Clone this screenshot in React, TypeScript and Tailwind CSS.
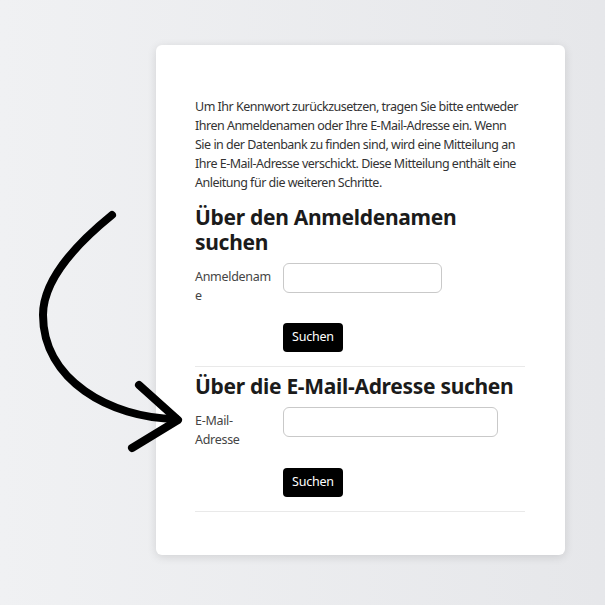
import type { ReactNode } from "react"

const font = { fontFamily: '"Noto Sans", "Open Sans", sans-serif' }

function Field({ label, inputWidth }: { label: ReactNode; inputWidth: string }) {
  return (
    <div className="flex items-start">
      <label className="w-[80px] pt-1 mr-[8px] text-[12.5px] leading-[19px] tracking-[-0.3px] text-[#444] break-all">
        {label}
      </label>
      <input
        type="text"
        className={`${inputWidth} h-[30px] rounded-[6px] border border-[#c9c9c9] bg-white px-2 text-[13px] outline-none`}
      />
    </div>
  )
}

function SearchButton() {
  return (
    <div className="pl-[88px]">
      <button className="h-[29px] px-[9px] rounded-[4px] bg-black text-white text-[12.5px] tracking-[-0.2px]">Suchen</button>
    </div>
  )
}

// hand-drawn curved arrow pointing at the e-mail field
function CurvedArrow() {
  return (
    <svg className="absolute left-0 top-0 pointer-events-none" width="605" height="605" viewBox="0 0 605 605">
      <g fill="none" stroke="#000" strokeWidth="8" strokeLinecap="round" strokeLinejoin="round">
        <path d="M112 215 C 75 245, 43 280, 43 315 C 43 380, 110 418, 176 419" />
        <path d="M139 385 L 178 420 L 132 448" />
      </g>
    </svg>
  )
}

export default function App() {
  return (
    <div className="relative w-[605px] h-[605px] overflow-hidden bg-gradient-to-r from-[#f0f1f3] to-[#e6e7ea]" style={font}>
      <div className="pt-[45px] pl-[156px]">
        <div className="w-[409px] h-[510px] bg-white rounded-[6px] shadow-[0_2px_10px_rgba(0,0,0,0.12)] pt-[52px] pl-[39px] pr-[40px]">
          <p className="text-[12.5px] leading-[19px] tracking-[-0.5px] text-[#333] whitespace-nowrap">
            Um Ihr Kennwort zurückzusetzen, tragen Sie bitte entweder
            <br />
            Ihren Anmeldenamen oder Ihre E-Mail-Adresse ein. Wenn
            <br />
            Sie in der Datenbank zu finden sind, wird eine Mitteilung an
            <br />
            Ihre E-Mail-Adresse verschickt. Diese Mitteilung enthält eine
            <br />
            Anleitung für die weiteren Schritte.
          </p>

          <h3 className="mt-[13px] mb-[8px] text-[21px] leading-[25px] font-bold tracking-[-0.3px] text-[#1b1b1b] pr-[60px]">
            Über den Anmeldenamen suchen
          </h3>
          <div className="mb-[18px]">
            <Field label="Anmeldename" inputWidth="w-[159px]" />
          </div>
          <SearchButton />
          <hr className="mt-[14px] border-t border-[#e9e9e9]" />

          <h3 className="mt-[7px] mb-[8px] text-[21px] leading-[25px] font-bold tracking-[-0.3px] text-[#1b1b1b]">
            Über die E-Mail-Adresse suchen
          </h3>
          <div className="mb-[19px]">
            <Field label={<>E-Mail-<br />Adresse</>} inputWidth="w-[215px]" />
          </div>
          <SearchButton />
          <hr className="mt-[14px] border-t border-[#e9e9e9]" />
        </div>
      </div>
      <CurvedArrow />
    </div>
  )
}
